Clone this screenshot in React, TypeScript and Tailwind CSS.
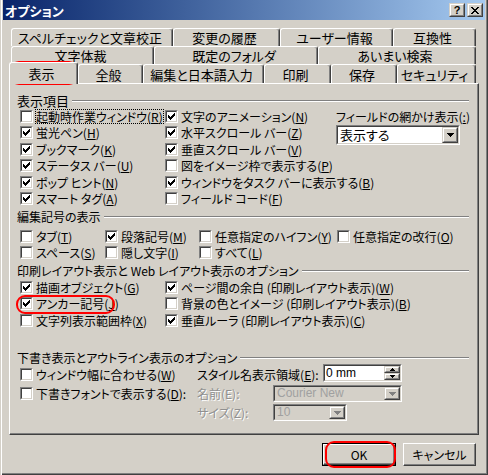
import React from 'react';

const CHECK = 'M6 0h1v1H6zM5 1h2v1H5zM0 2h1v1H0zM4 2h3v1H4zM0 3h2v1H0zM3 3h3v1H3zM0 4h5v1H0zM1 5h3v1H1zM2 6h1v1H2z';
const TRI_DOWN = 'M0 0h7v1H0zM1 1h5v1H1zM2 2h3v1H2zM3 3h1v1H3z';
const SPIN_UP = 'M2 0h1v1H2zM1 1h3v1H1zM0 2h5v1H0z';
const SPIN_DOWN = 'M0 0h5v1H0zM1 1h3v1H1zM2 2h1v1H2z';
const CLOSE_X = 'M0 0h2v1H0zM6 0h2v1H6zM1 1h2v1H1zM5 1h2v1H5zM2 2h4v1H2zM3 3h2v1H3zM2 4h4v1H2zM1 5h2v1H1zM5 5h2v1H5zM0 6h2v1H0zM6 6h2v1H6z';

// "蛍光ペン(&H)" -> 蛍光ペン(<u>H</u>)
function Label({ text }: { text: string }) {
  const i = text.indexOf('&');
  if (i < 0) return <>{text}</>;
  return (
    <>
      {text.slice(0, i)}
      <u>{text[i + 1]}</u>
      {text.slice(i + 2)}
    </>
  );
}

function Check({ checked }: { checked?: boolean }) {
  return (
    <span className="flex w-[13px] h-[13px] shrink-0 border border-t-[#808080] border-l-[#808080] border-b-white border-r-white">
      <span className="flex flex-1 items-center justify-center bg-white border border-t-[#404040] border-l-[#404040] border-b-[#d4d0c8] border-r-[#d4d0c8]">
        {checked && (
          <svg width="7" height="7" viewBox="0 0 7 7" shapeRendering="crispEdges">
            <path d={CHECK} fill="#000" />
          </svg>
        )}
      </span>
    </span>
  );
}

function CheckRow({ text, checked, focus, className = 'h-[16.5px]' }: { text: string; checked?: boolean; focus?: boolean; className?: string }) {
  return (
    <div className={'flex items-center ' + className}>
      <Check checked={checked} />
      <span
        className={
          'ml-[2px] px-[1px] leading-[15px] whitespace-nowrap ' +
          (focus ? 'outline-1 outline-dotted outline-black outline-offset-[-1px]' : '')
        }
      >
        <Label text={text} />
      </span>
    </div>
  );
}

function GroupLabel({ text, className = '' }: { text: string; className?: string }) {
  return (
    <div className={'flex items-center h-[14px] pl-[7px] pr-[9px] ' + className}>
      <span className="whitespace-nowrap leading-[14px]">{text}</span>
      <span className="flex-1 ml-[3px] h-[2px] border-t border-t-[#808080] border-b border-b-white" />
    </div>
  );
}

function Raised({ children, className = '' }: { children?: React.ReactNode; className?: string }) {
  return (
    <div className={'flex border border-t-[#d4d0c8] border-l-[#d4d0c8] border-b-[#404040] border-r-[#404040] ' + className}>
      <div className="flex flex-1 items-center justify-center bg-[#d4d0c8] border border-t-white border-l-white border-b-[#808080] border-r-[#808080]">
        {children}
      </div>
    </div>
  );
}

function Combo({ value, disabled, latin, className }: { value: string; disabled?: boolean; latin?: boolean; className: string }) {
  return (
    <div className={'flex border border-t-[#808080] border-l-[#808080] border-b-white border-r-white ' + className}>
      <div
        className={
          'flex flex-1 min-w-0 border border-t-[#404040] border-l-[#404040] border-b-[#d4d0c8] border-r-[#d4d0c8] ' +
          (disabled ? 'bg-[#d4d0c8]' : 'bg-white')
        }
      >
        <span
          className={
            'flex flex-1 items-center pl-[2px] whitespace-nowrap overflow-hidden ' +
            (latin ? "font-['Liberation_Sans',sans-serif] text-[12px] " : 'text-[13px] ') +
            (disabled ? 'text-[#a0a0a0]' : '')
          }
        >
          {value}
        </span>
        <Raised className="w-[16px]">
          <svg width="7" height="4" viewBox="0 0 7 4" shapeRendering="crispEdges">
            <path d={TRI_DOWN} fill={disabled ? '#808080' : '#000'} />
          </svg>
        </Raised>
      </div>
    </div>
  );
}

function SpinInput() {
  return (
    <div className="flex w-[79px] h-[18px] -mt-[3px] border border-t-[#808080] border-l-[#808080] border-b-white border-r-white">
      <div className="flex flex-1 bg-white border border-t-[#404040] border-l-[#404040] border-b-[#d4d0c8] border-r-[#d4d0c8]">
        <span className="flex flex-1 items-center pl-[1px] font-['Liberation_Sans',sans-serif] text-[12px]">0 mm</span>
        <div className="flex flex-col w-[16px]">
          <Raised className="flex-1">
            <svg width="5" height="3" viewBox="0 0 5 3" shapeRendering="crispEdges">
              <path d={SPIN_UP} fill="#000" />
            </svg>
          </Raised>
          <Raised className="flex-1">
            <svg width="5" height="3" viewBox="0 0 5 3" shapeRendering="crispEdges">
              <path d={SPIN_DOWN} fill="#000" />
            </svg>
          </Raised>
        </div>
      </div>
    </div>
  );
}

function Tab({ label, className }: { label: string; className: string }) {
  return (
    <div
      className={
        'flex items-center justify-center pr-[4px] whitespace-nowrap bg-[#d4d0c8] border-l border-t border-r border-l-white border-t-white border-r-[#404040] rounded-t-[3px] shadow-[inset_-1px_0_0_#808080] ' +
        className
      }
    >
      {label}
    </div>
  );
}

const RING = 'absolute border-2 border-[#ff0000] pointer-events-none';

export default function App() {
  return (
    <div className="relative w-[488px] h-[475px] overflow-hidden bg-[#d4d0c8] px-[3px] text-black text-[12px] leading-[15px] font-['Noto_Sans_CJK_JP',sans-serif] [font-feature-settings:'palt'] shadow-[inset_1px_0_0_#d4d0c8,inset_2px_0_0_#fff,inset_-1px_-1px_0_#404040,inset_-2px_-2px_0_#808080]">
      {/* title bar */}
      <div className="flex items-center justify-between h-[20px] pl-[2px] pr-[2px] bg-linear-to-r from-[#0a246a] to-[#a6caf0]">
        <span className="text-white font-bold text-[13px]">オプション</span>
        <div className="flex gap-[2px]">
          <Raised className="w-[16px] h-[14px]">
            <span className="font-['Liberation_Sans',sans-serif] font-bold text-[11px] leading-[11px]">?</span>
          </Raised>
          <Raised className="w-[16px] h-[14px]">
            <svg width="8" height="7" viewBox="0 0 8 7" shapeRendering="crispEdges">
              <path d={CLOSE_X} fill="#000" />
            </svg>
          </Raised>
        </div>
      </div>

      {/* tabs */}
      <div className="flex h-[18px] mt-[8px] ml-[8px] text-[13px]">
        <Tab label="スペルチェックと文章校正" className="w-[162px]" />
        <Tab label="変更の履歴" className="w-[107px]" />
        <Tab label="ユーザー情報" className="w-[113px]" />
        <Tab label="互換性" className="w-[83px]" />
      </div>
      <div className="flex h-[18px] ml-[8px] text-[13px]">
        <Tab label="文字体裁" className="w-[143px]" />
        <Tab label="既定のフォルダ" className="w-[164px]" />
        <Tab label="あいまい検索" className="w-[158px]" />
      </div>
      <div className="flex items-end h-[19px] ml-[6px] text-[13px]">
        <Tab label="表示" className="w-[69px] h-[22px] relative top-[1px] z-10" />
        <Tab label="全般" className="w-[65px] h-full" />
        <Tab label="編集と日本語入力" className="w-[121px] h-full" />
        <Tab label="印刷" className="w-[67px] h-full" />
        <Tab label="保存" className="w-[66px] h-full" />
        <Tab label="セキュリティ" className="w-[79px] h-full" />
      </div>

      {/* panel */}
      <div className="ml-[6px] w-[470px] h-[352px] flex flex-col border border-t-white border-l-white border-b-[#404040] border-r-[#404040] shadow-[inset_-1px_-1px_0_#808080]">
        <GroupLabel text="表示項目" className="mt-[10px] text-[13px]" />
        <div className="flex pl-[10px]">
          <div className="flex flex-col w-[145px]">
            <CheckRow text="起動時作業ウィンドウ(&R)" focus />
            <CheckRow text="蛍光ペン(&H)" checked />
            <CheckRow text="ブックマーク(&K)" checked />
            <CheckRow text="ステータス バー(&U)" checked />
            <CheckRow text="ポップ ヒント(&N)" checked />
            <CheckRow text="スマート タグ(&A)" checked />
          </div>
          <div className="flex flex-col w-[171px]">
            <CheckRow text="文字のアニメーション(&N)" checked />
            <CheckRow text="水平スクロール バー(&Z)" checked />
            <CheckRow text="垂直スクロール バー(&V)" checked />
            <CheckRow text="図をイメージ枠で表示する(&P)" />
            <CheckRow text="ウィンドウをタスク バーに表示する(&B)" checked />
            <CheckRow text="フィールド コード(&F)" />
          </div>
          <div className="flex flex-col">
            <div className="flex items-center h-[16.5px] whitespace-nowrap">
              <Label text="フィールドの網かけ表示(&:)" />
            </div>
            <Combo value="表示する" className="w-[124px] h-[20px]" />
          </div>
        </div>

        <GroupLabel text="編集記号の表示" className="mt-[3px]" />
        <div className="grid grid-cols-[85px_94px_138px_1fr] pl-[10px] mt-[4px]">
          <CheckRow text="タブ(&T)" />
          <CheckRow text="段落記号(&M)" checked />
          <CheckRow text="任意指定のハイフン(&Y)" />
          <CheckRow text="任意指定の改行(&O)" />
          <CheckRow text="スペース(&S)" />
          <CheckRow text="隠し文字(&I)" />
          <CheckRow text="すべて(&L)" />
        </div>

        <GroupLabel text="印刷レイアウト表示と Web レイアウト表示のオプション" className="mt-[3px]" />
        <div className="grid grid-cols-[145px_1fr] pl-[10px] mt-[1px]">
          <CheckRow text="描画オブジェクト(&G)" checked />
          <CheckRow text="ページ間の余白 (印刷レイアウト表示)(&W)" checked />
          <CheckRow text="アンカー記号(&J)" checked />
          <CheckRow text="背景の色とイメージ (印刷レイアウト表示)(&B)" />
          <CheckRow text="文字列表示範囲枠(&X)" />
          <CheckRow text="垂直ルーラ (印刷レイアウト表示)(&C)" checked />
        </div>

        <GroupLabel text="下書き表示とアウトライン表示のオプション" className="mt-[22.5px]" />
        <div className="flex items-center h-[19px] pl-[10px]">
          <CheckRow text="ウィンドウ幅に合わせる(&W)" className="w-[177px]" />
          <span className="w-[126px] whitespace-nowrap">
            <Label text="スタイル名表示領域(&E):" />
          </span>
          <SpinInput />
        </div>
        <div className="flex items-center h-[19px] pl-[10px]">
          <CheckRow text="下書きフォントで表示する(&D):" className="w-[177px]" />
          <span className="w-[76px] whitespace-nowrap text-[#909090] [text-shadow:1px_1px_0_#fff]">名前(E):</span>
          <Combo value="Courier New" disabled latin className="w-[129px] h-[17px]" />
        </div>
        <div className="flex items-center h-[19px] pl-[10px]">
          <span className="w-[177px]" />
          <span className="w-[76px] whitespace-nowrap text-[#909090] [text-shadow:1px_1px_0_#fff]">サイズ(Z):</span>
          <Combo value="10" disabled latin className="w-[74px] h-[17px]" />
        </div>
      </div>

      {/* buttons */}
      <div className="flex justify-end gap-[7px] mt-[8px] pr-[9px]">
        <button className="flex w-[74px] h-[23px] p-0 border border-black bg-[#d4d0c8]">
          <span className="flex flex-1 items-center justify-center border border-t-white border-l-white border-b-[#404040] border-r-[#404040] shadow-[inset_-1px_-1px_0_#808080]">
            OK
          </span>
        </button>
        <button className="flex w-[73px] h-[23px] p-0 items-center justify-center bg-[#d4d0c8] border border-t-white border-l-white border-b-[#404040] border-r-[#404040] shadow-[inset_-1px_-1px_0_#808080]">
          キャンセル
        </button>
      </div>

      {/* red annotation rings */}
      <span className={RING + ' left-[10px] top-[61px] w-[68px] h-[24px] rounded-[9px]'} />
      <span className={RING + ' left-[16px] top-[295px] w-[99px] h-[19px] rounded-[9px]'} />
      <span className={RING + ' left-[325px] top-[441px] w-[71px] h-[27px] rounded-[9px]'} />
    </div>
  );
}
